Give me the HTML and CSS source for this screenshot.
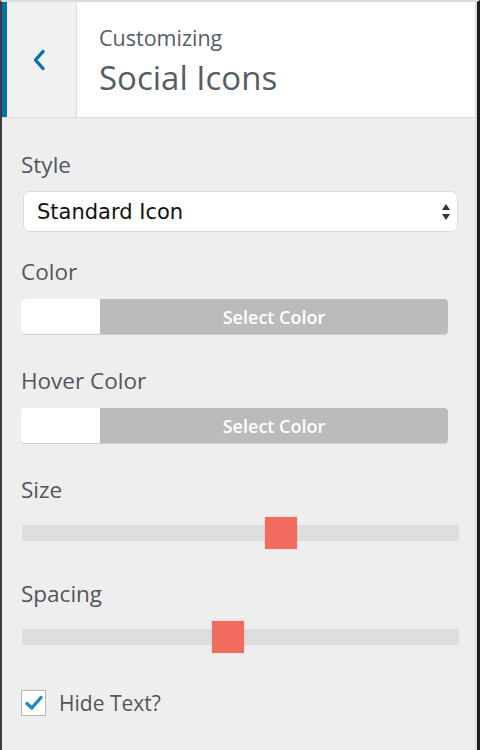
FILE: index.html
```html
<!DOCTYPE html>
<html>
<head>
<meta charset="utf-8">
<link rel="stylesheet" href="styles.css">
</head>
<body>
<div class="panel">
  <header class="header">
    <button class="back" aria-label="Back">
      <svg width="14" height="22" viewBox="0 0 14 22"><path d="M11 2.5 L3.5 11 L11 19.5" fill="none" stroke="#0073aa" stroke-width="3.4" stroke-linecap="round" stroke-linejoin="round"/></svg>
    </button>
    <div class="titles">
      <div class="pre">Customizing</div>
      <h1 class="title">Social Icons</h1>
    </div>
  </header>
  <main class="content">
    <div class="field field-select">
      <div class="label">Style</div>
      <div class="select">
        <span>Standard Icon</span>
        <svg class="arrows" width="10" height="18" viewBox="0 0 10 18"><path d="M5 1 L9 7 L1 7 Z" fill="#333"/><path d="M1 11 L9 11 L5 17 Z" fill="#333"/></svg>
      </div>
    </div>
    <div class="field field-color">
      <div class="label">Color</div>
      <div class="picker"><span class="swatch"></span><span class="pick-btn">Select Color</span></div>
    </div>
    <div class="field field-color">
      <div class="label">Hover Color</div>
      <div class="picker"><span class="swatch"></span><span class="pick-btn">Select Color</span></div>
    </div>
    <div class="field field-range">
      <div class="label">Size</div>
      <input class="range" type="range" min="0" max="100" value="60">
    </div>
    <div class="field field-range last">
      <div class="label">Spacing</div>
      <input class="range" type="range" min="0" max="100" value="47">
    </div>
    <label class="check-row">
      <span class="checkbox"><svg width="18" height="16" viewBox="0 0 18 16"><path d="M2 8.5 L6.8 13 L16 2.5" fill="none" stroke="#1e8cbe" stroke-width="3.4" stroke-linecap="round" stroke-linejoin="round"/></svg></span>
      <span class="check-text">Hide Text?</span>
    </label>
  </main>
</div>
</body>
</html>
```

FILE: styles.css
```css
* { box-sizing: border-box; }
html, body { margin: 0; padding: 0; }
body {
  width: 480px;
  height: 750px;
  overflow: hidden;
  background: #eeeeee;
  font-family: "Open Sans", "Liberation Sans", sans-serif;
}
.panel {
  width: 480px;
  height: 750px;
  background: #eeeeee;
  border-left: 2px solid #3a3a40;
  border-right: 3px solid #1d1d1f;
  border-top: 2px solid #dcdcdc;
  display: flex;
  flex-direction: column;
}
.header {
  height: 116px;
  display: flex;
  background: #ffffff;
  border-bottom: 1px solid #dddddd;
  border-right: 2px solid #dddddd;
  flex-shrink: 0;
}
.back {
  width: 75px;
  height: 100%;
  border: none;
  border-left: 5px solid #0073aa;
  border-right: 1px solid #dddddd;
  background: #f1f1f1;
  display: flex;
  align-items: center;
  justify-content: center;
  padding: 0 6px 0 0;
  margin: 0;
}
.titles {
  padding: 23px 0 0 22px;
  color: #555d66;
}
.pre {
  font-size: 21.5px;
  line-height: 26px;
}
.title {
  margin: 7px 0 0;
  font-size: 33px;
  line-height: 40px;
  font-weight: 400;
}
.content {
  padding: 33px 0 0 19px;
  border-right: 2px solid #dddddd;
  flex: 1;
}
.label {
  font-size: 22.5px;
  line-height: 28px;
  color: #50575e;
  margin-bottom: 12px;
}
.field-select { margin-bottom: 26px; }
.field-color { margin-bottom: 33px; }
.field-color .label { margin-bottom: 13px; }
.field-range { margin-bottom: 31px; }
.field-range .label { margin-bottom: 13px; }
.field-range.last { margin-bottom: 36px; }
.select {
  margin-left: 2px;
  width: 435px;
  height: 41px;
  background: #ffffff;
  border: 1px solid #dcdcdc;
  border-radius: 7px;
  display: flex;
  align-items: center;
  justify-content: space-between;
  padding: 0 6px 0 13px;
  font-family: "DejaVu Sans", sans-serif;
  font-size: 21px;
  color: #111;
}
.arrows { display: block; }
.picker {
  width: 427px;
  height: 35px;
  display: flex;
  border-radius: 4px;
  overflow: hidden;
  box-shadow: 0 1px 0 #cfcfcf;
}
.swatch {
  width: 79px;
  background: #ffffff;
}
.pick-btn {
  flex: 1;
  background: #bbbbbb;
  color: #ffffff;
  font-size: 18px;
  font-weight: 600;
  display: flex;
  align-items: center;
  justify-content: center;
}
.range {
  -webkit-appearance: none;
  appearance: none;
  display: block;
  margin: 0 0 0 1px;
  width: 437px;
  height: 32px;
  background: transparent;
  padding: 0;
}
.range::-webkit-slider-runnable-track {
  height: 16px;
  background: #dedede;
  border: none;
}
.range::-webkit-slider-thumb {
  -webkit-appearance: none;
  width: 32px;
  height: 32px;
  margin-top: -8px;
  background: #f26b5f;
  border: none;
  box-shadow: 0 0 2px rgba(0,0,0,0.15);
}
.check-row {
  display: flex;
  align-items: center;
  gap: 13px;
}
.checkbox {
  width: 25px;
  height: 26px;
  background: #ffffff;
  border: 1px solid #b4b9be;
  display: flex;
  align-items: center;
  justify-content: center;
  padding-left: 1px;
}
.check-text {
  font-size: 21px;
  color: #50575e;
}
```
